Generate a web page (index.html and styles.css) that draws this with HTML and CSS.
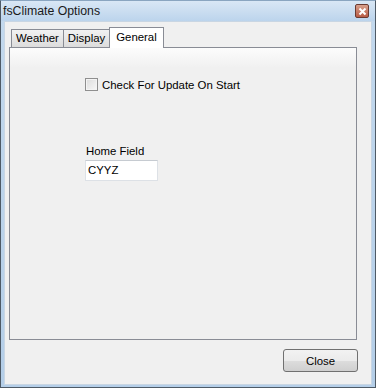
FILE: index.html
```html
<!DOCTYPE html>
<html lang="en">
<head>
    <meta charset="UTF-8">
    <title>fsClimate Options</title>
    <link rel="stylesheet" href="styles.css">
</head>
<body>
    <div class="window">
        <div class="titlebar">
            <span class="title">fsClimate Options</span>
            <span class="close-x">
                <svg width="9" height="9" viewBox="0 0 9 9">
                    <path d="M1.5 1.5 L7.5 7.5 M7.5 1.5 L1.5 7.5" stroke="#fff" stroke-width="2"/>
                </svg>
            </span>
        </div>
        <div class="client">
            <div class="tabs">
                <div class="tab">Weather</div>
                <div class="tab">Display</div>
                <div class="tab active">General</div>
            </div>
            <div class="panel">
                <label class="check-row">
                    <span class="checkbox"></span>
                    <span>Check For Update On Start</span>
                </label>
                <div class="field">
                    <div class="field-label">Home Field</div>
                    <div class="textbox">CYYZ</div>
                </div>
            </div>
            <div class="footer">
                <div class="button">Close</div>
            </div>
        </div>
    </div>
</body>
</html>
```

FILE: styles.css
```css
* {
    margin: 0;
    padding: 0;
    box-sizing: border-box;
}

body {
    width: 376px;
    height: 388px;
    background: #fff;
    font-family: 'Liberation Sans', Arial, sans-serif;
    font-size: 11.4px;
    color: #000;
}

.window {
    width: 376px;
    height: 388px;
    display: flex;
    flex-direction: column;
    background: linear-gradient(to bottom, #c3d9ee, #b4cee8);
    border-left: 1px solid #4e5a66;
    border-right: 1px solid #4e5a66;
    border-top: 1px solid #8aa5c0;
    border-bottom: 1px solid #4e5a66;
}

.titlebar {
    height: 20px;
    display: flex;
    align-items: center;
    justify-content: space-between;
    padding: 0 4px 0 2px;
    background: linear-gradient(to bottom, #d9e7f5, #bcd4ec);
}

.title {
    font-size: 12.3px;
    color: #1a1a1a;
}

.close-x {
    width: 14px;
    height: 14px;
    display: flex;
    align-items: center;
    justify-content: center;
    background: linear-gradient(to bottom, #d8a08c, #b85b45);
    border: 1px solid #6b3a30;
    border-radius: 2px;
    margin-right: 2px;
}

.client {
    flex: 1;
    margin: 0 3px 2px 3px;
    background: #f0f0f0;
    border: 1px solid #c9d6e3;
    padding: 5px 14px 0 4px;
    display: flex;
    flex-direction: column;
}

.tabs {
    display: flex;
    align-items: flex-end;
    height: 20px;
    padding-left: 2px;
    position: relative;
    z-index: 1;
}

.tab {
    height: 18px;
    padding: 2px 4px 0 4px;
    background: linear-gradient(to bottom, #f2f2f2, #dcdcdc);
    border: 1px solid #898c95;
    border-bottom: none;
    margin-right: -1px;
    color: #000;
}

.tab.active {
    height: 21px;
    margin-bottom: -1px;
    padding: 3px 6px 0 6px;
    background: #fff;
}

.panel {
    height: 293px;
    border: 1px solid #898c95;
    background: linear-gradient(to bottom, #fcfcfc, #f0f0f0 20px);
    padding: 30px 0 0 75px;
}

.check-row {
    display: flex;
    align-items: center;
    gap: 4px;
}

.checkbox {
    width: 13px;
    height: 13px;
    border: 1px solid #8f8f8f;
    background: linear-gradient(135deg, #dcdcdc, #f8f8f8);
    box-shadow: inset 0 0 0 1px #f4f4f4;
}

.field {
    margin-top: 54px;
}

.field-label {
    padding-left: 1px;
    margin-bottom: 3px;
}

.textbox {
    width: 73px;
    height: 21px;
    background: #fff;
    border: 1px solid #dde1e6;
    border-top-color: #c6cbd1;
    padding: 3px 0 0 2px;
}

.footer {
    display: flex;
    justify-content: flex-end;
    padding-top: 9px;
}

.button {
    width: 75px;
    height: 23px;
    display: flex;
    align-items: center;
    justify-content: center;
    border: 1px solid #707070;
    border-radius: 3px;
    background: linear-gradient(to bottom, #f2f2f2 0%, #ebebeb 50%, #dddddd 51%, #cfcfcf 100%);
    margin-right: -1px;
}
```
